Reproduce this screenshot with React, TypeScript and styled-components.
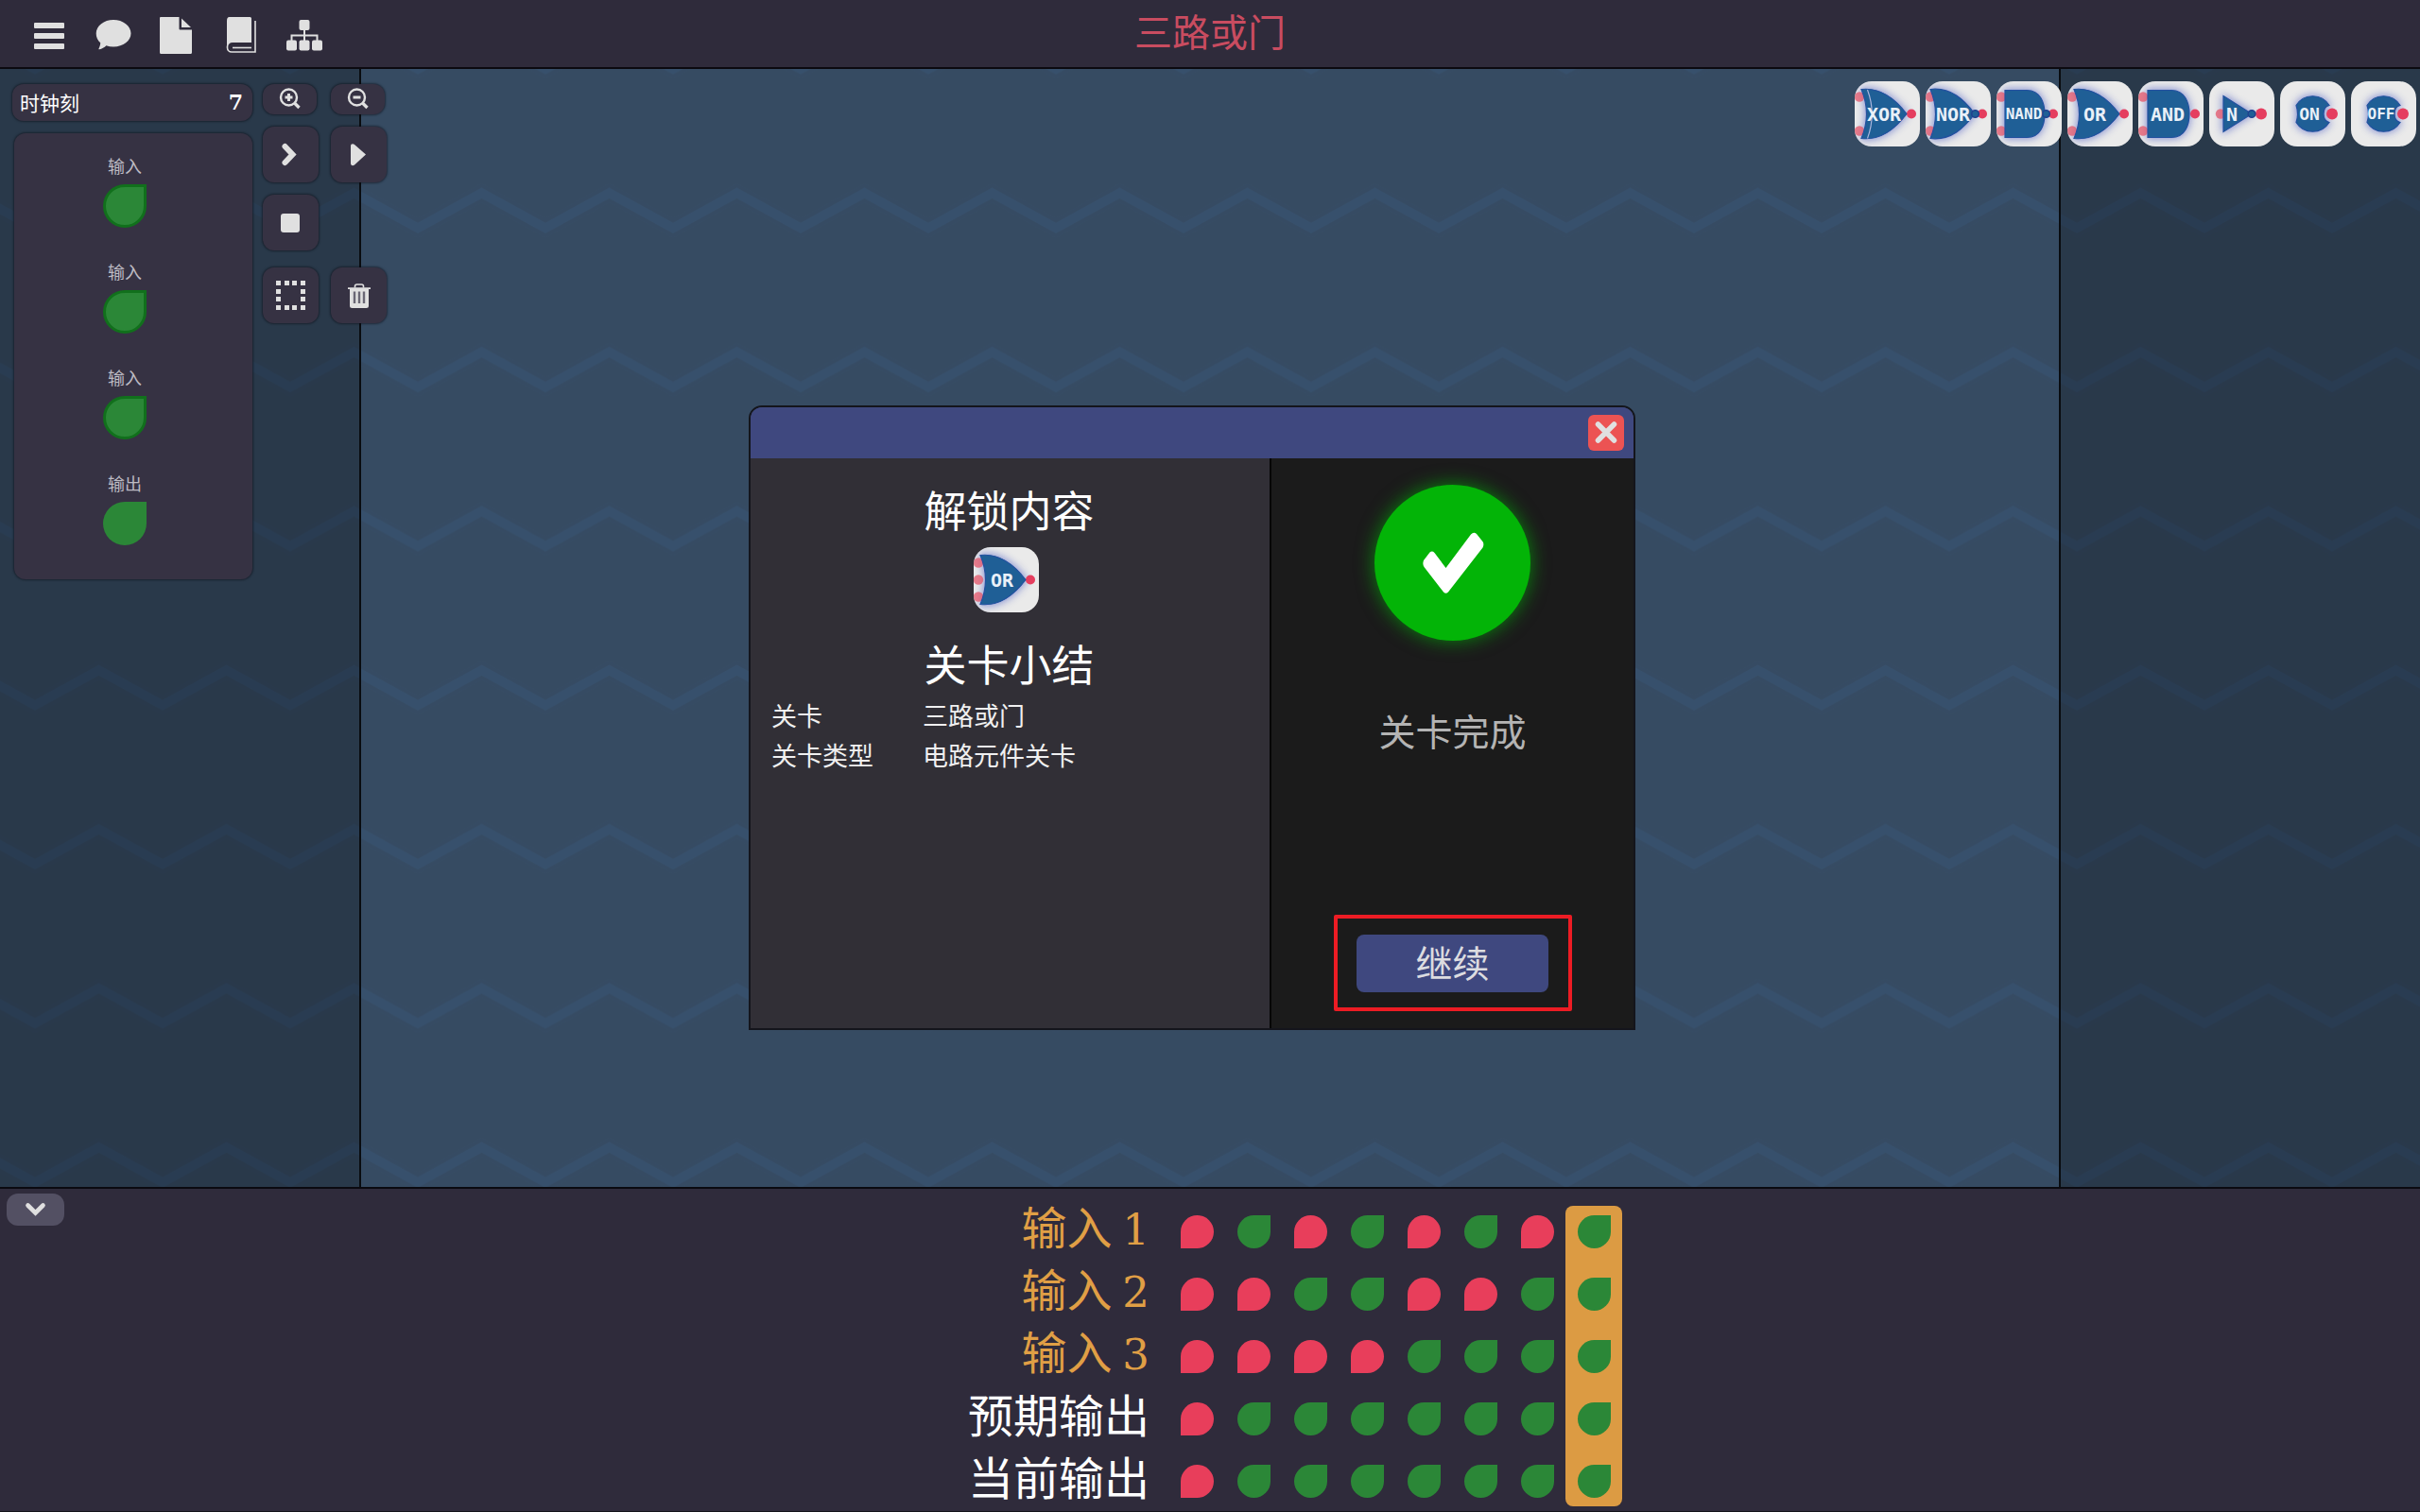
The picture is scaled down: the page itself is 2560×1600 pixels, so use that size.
import React from "react";
import styled, { createGlobalStyle } from "styled-components";

const GlobalStyle = createGlobalStyle`
  *, *::before, *::after { box-sizing: border-box; }
  body {
    margin: 0;
    background: #2f2b3b;
    color: #ffffff;
    font-family: "Noto Sans CJK SC", "Noto Sans", sans-serif;
  }
  button { font: inherit; color: inherit; border: 0; padding: 0; cursor: pointer; }
`;

const INK = "#e0e0e0";

/* ---------- page frame ---------- */

const Page = styled.div`
  min-height: 100vh;
  display: flex;
  flex-direction: column;
`;

const Header = styled.header`
  display: grid;
  grid-template-columns: 1fr auto 1fr;
  align-items: center;
  height: 73px;
  border-bottom: 2px solid #0b0a10;
`;

const MenuBar = styled.nav`
  display: flex;
  gap: 8px;
  padding-left: 22px;
`;

const MenuButton = styled.button`
  width: 60px;
  height: 60px;
  background: none;
  svg { display: block; }
`;

const Title = styled.h1`
  margin: 0;
  padding-bottom: 8px;
  font-size: 40px;
  line-height: 60px;
  font-weight: 400;
  color: #c94c60;
`;

const Stage = styled.main`
  position: relative;
  flex: 1;
  display: flex;
  justify-content: space-between;
  align-items: flex-start;
  background: #364b62;
  overflow: hidden;
`;

const Waves = styled.svg`
  position: absolute;
  inset: 0;
  width: 100%;
  height: 100%;
`;

const Lane = styled.div<{ $side: "left" | "right" }>`
  position: absolute;
  top: 0;
  bottom: 0;
  ${(p) => p.$side}: 0;
  width: 382px;
  background: rgba(0, 0, 0, 0.24);
  border: 0 solid #090c10;
  border-${(p) => (p.$side === "left" ? "right" : "left")}-width: 2px;
`;

/* ---------- left tools ---------- */

const Tools = styled.div`
  position: relative;
  display: flex;
  gap: 11px;
  padding: 16px 0 0 13px;
`;

const Side = styled.div`
  display: flex;
  flex-direction: column;
  gap: 13px;
  width: 254px;
`;

const Tick = styled.div`
  display: flex;
  justify-content: space-between;
  align-items: center;
  height: 39px;
  padding: 0 10px 0 8px;
  border-radius: 12px;
  background: #363243;
  box-shadow: 0 0 2px 1px rgba(10, 12, 20, 0.5);
  font-size: 21px;
  line-height: 39px;
`;

const TickCount = styled.b`
  font-family: "DejaVu Serif", serif;
  font-size: 22px;
`;

const Ports = styled.div`
  display: flex;
  flex-direction: column;
  margin-left: 2px;
  padding: 22px 18px 2px 0;
  border-radius: 12px;
  background: #363243;
  box-shadow: 0 0 2px 1px rgba(10, 12, 20, 0.5);
`;

const Port = styled.div`
  display: flex;
  flex-direction: column;
  align-items: center;
  gap: 8px;
  height: 112px;
  color: #bdbbc3;
  font-size: 18px;
  line-height: 24px;
`;

const PortDrop = styled.button<{ $output?: boolean }>`
  width: 46px;
  height: 46px;
  border: ${(p) => (p.$output ? "0" : "3px solid #11701c")};
  border-radius: 50% 0 50% 50%;
  background: #2b8737;
`;

const Controls = styled.div`
  display: grid;
  grid-template-columns: 59px 59px;
  column-gap: 13px;
  row-gap: 13px;
  align-content: start;
`;

const Tool = styled.button<{ $short?: boolean; $spaced?: boolean; $first?: boolean }>`
  display: grid;
  place-items: center;
  width: ${(p) => (p.$short ? 57 : 59)}px;
  height: ${(p) => (p.$short ? 32 : 59)}px;
  margin-top: ${(p) => (p.$spaced ? 5 : 0)}px;
  grid-column: ${(p) => (p.$first ? 1 : "auto")};
  border-radius: 12px;
  background: #363243;
  box-shadow: 0 0 2px 1px rgba(10, 12, 20, 0.5);
`;

/* ---------- gate palette ---------- */

const Palette = styled.div`
  position: relative;
  display: flex;
  gap: 6px;
  padding: 13px 4px 0 0;
`;

const GateTile = styled.button`
  width: 69px;
  height: 69px;
  border-radius: 18px;
  background: #eaeaea;
  overflow: hidden;
  svg { display: block; }
`;

/* ---------- dialog ---------- */

const DialogLayer = styled.div`
  position: absolute;
  inset: 0;
  display: flex;
  justify-content: center;
  align-items: flex-start;
  padding: 356px 38px 0 0;
  pointer-events: none;
`;

const Dialog = styled.section`
  width: 938px;
  border: 2px solid #14151c;
  border-radius: 14px 14px 0 0;
  overflow: hidden;
  pointer-events: auto;
`;

const DialogBar = styled.div`
  display: flex;
  justify-content: flex-end;
  align-items: center;
  height: 54px;
  padding-right: 10px;
  background: #3f487f;
`;

const Close = styled.button`
  display: grid;
  place-items: center;
  width: 38px;
  height: 38px;
  border-radius: 6px;
  background: #ec5353;
`;

const DialogBody = styled.div`
  display: grid;
  grid-template-columns: 1fr 385px;
  min-height: 603px;
`;

const Summary = styled.div`
  display: flex;
  flex-direction: column;
  align-items: center;
  padding: 23px 24px 0 22px;
  background: #312f36;
`;

const Heading = styled.h2`
  margin: 0;
  font-size: 45px;
  line-height: 62px;
  font-weight: 400;
`;

const Unlocked = styled.div`
  display: flex;
  justify-content: center;
  padding: 9px 6px 23px 0;
`;

const Facts = styled.table`
  width: 100%;
  margin-top: 3px;
  border-collapse: collapse;
  font-size: 27px;
  line-height: 42px;
  color: #f0f0f0;
  th, td { padding: 0; text-align: left; font-weight: 400; }
  th { width: 160px; }
`;

const Result = styled.div`
  display: flex;
  flex-direction: column;
  align-items: center;
  padding: 28px 0 18px;
  border-left: 2px solid #060606;
  background: #1b1b1b;
`;

const Badge = styled.div`
  display: grid;
  place-items: center;
  width: 165px;
  height: 165px;
  border-radius: 50%;
  background: #03b407;
  box-shadow: 0 0 20px rgba(3, 180, 7, 0.7);
`;

const ResultText = styled.p`
  margin: 68px 0 0;
  font-size: 39px;
  line-height: 52px;
  color: #b4b4b4;
`;

const Frame = styled.div`
  margin-top: auto;
  display: grid;
  place-items: center;
  width: 252px;
  height: 102px;
  border: 4px solid #ed1c24;
  border-radius: 2px;
`;

const Continue = styled.button`
  width: 203px;
  height: 61px;
  padding-bottom: 4px;
  border-radius: 8px;
  background: #3f487f;
  color: #dcdce0;
  font-size: 39px;
  line-height: 56px;
`;

/* ---------- truth table ---------- */

const Footer = styled.footer`
  display: grid;
  grid-template-columns: 180px 1fr;
  align-items: start;
  border-top: 2px solid #0b0a10;
  box-shadow: inset 0 -1px 0 #14131a;
`;

const Collapse = styled.button`
  display: grid;
  place-items: center;
  width: 61px;
  height: 34px;
  margin: 5px 0 0 7px;
  border-radius: 12px;
  background: #535063;
`;

const TruthWrap = styled.div`
  position: relative;
  justify-self: center;
  padding-top: 12px;
`;

const Marker = styled.div`
  position: absolute;
  top: 18px;
  bottom: 6px;
  right: 0;
  width: 60px;
  border-radius: 8px;
  background: #dc9b43;
`;

const Truth = styled.table`
  position: relative;
  border-collapse: collapse;
  td, th { height: 66px; padding: 0; }
`;

const SignalName = styled.th<{ $input: boolean }>`
  && { padding: 0 20px 12px 0; }
  font-size: 48px;
  line-height: 52px;
  font-weight: 400;
  text-align: right;
  white-space: nowrap;
  color: ${(p) => (p.$input ? "#e09f45" : "#ffffff")};
`;

const Digit = styled.span`
  font-family: "DejaVu Serif", serif;
  font-size: 45px;
  line-height: 1;
`;

const SignalCell = styled.td`
  width: 60px;
`;

const Drop = styled.div<{ $on: boolean }>`
  width: 35px;
  height: 35px;
  margin: 0 auto;
  background: ${(p) => (p.$on ? "#2b8737" : "#e83e5b")};
  border-radius: ${(p) => (p.$on ? "50% 0 50% 50%" : "50% 50% 50% 0")};
`;

/* ---------- drawings ---------- */

function MenuIcon({ children }: { children: React.ReactNode }) {
  return (
    <svg width="60" height="60" viewBox="0 0 60 60" fill={INK}>
      {children}
    </svg>
  );
}

const menu = [
  {
    name: "菜单",
    icon: (
      <>
        <rect x="14" y="18" width="32" height="6" rx="1" />
        <rect x="14" y="29" width="32" height="6" rx="1" />
        <rect x="14" y="40" width="32" height="6" rx="1" />
      </>
    ),
  },
  {
    name: "对话",
    icon: (
      <path d="M30 15c10 0 18.500 6.300 18.500 14.300S40.500 43.500 30 43.500c-2.800 0-5.300-.4-7.600-1.200-2 2-4.700 3.600-7.300 4-.7 0-.9-.6-.5-1.100 1-1.900 1.600-3.900 1.600-5.900-3-2.600-4.500-6-4.500-10C11.700 21.300 20 15 30 15z" />
    ),
  },
  {
    name: "文件",
    icon: (
      <>
        <path d="M12 12h19.500v12.500a1 1 0 0 0 1 1H45V49.500a1.500 1.500 0 0 1-1.500 1.500h-31A1.500 1.500 0 0 1 11 49.500V13a1 1 0 0 1 1-1z" />
        <path d="M34 13.500v9.500h10z" />
      </>
    ),
  },
  {
    name: "手册",
    icon: (
      <>
        <path d="M16.500 12H38.500a1.500 1.500 0 0 1 1.500 1.500V39H20c-3 0-4.500 2-5 4.500l-1 1V16c0-2.500 1-4 2.500-4z" />
        <path
          d="M44 16V49H19a4.500 4.500 0 0 1-4.500-4.500v-2"
          fill="none"
          stroke={INK}
          strokeWidth="1.600"
        />
        <path d="M20 44.500h20" stroke={INK} strokeWidth="1.600" />
      </>
    ),
  },
  {
    name: "关卡图",
    icon: (
      <>
        <rect x="22.500" y="15" width="11" height="11" rx="2" />
        <rect x="9" y="36.500" width="11" height="11" rx="2" />
        <rect x="22.500" y="36.500" width="11" height="11" rx="2" />
        <rect x="36" y="36.500" width="11" height="11" rx="2" />
        <path d="M28 25v12M14.500 37v-5.500h27V37" fill="none" stroke={INK} strokeWidth="2" />
      </>
    ),
  },
];

function ZoomIcon({ plus }: { plus?: boolean }) {
  return (
    <svg width="24" height="24" viewBox="0 0 24 24" fill="none" stroke={INK} strokeWidth="2.400">
      <circle cx="10.500" cy="10" r="8.500" />
      <path d="M16.500 16l5 5" strokeWidth="3.400" />
      <path d={plus ? "M6.500 10h8M10.500 6v8" : "M6.500 10h8"} strokeWidth="3" />
    </svg>
  );
}

function StepIcon() {
  return (
    <svg width="28" height="28" viewBox="0 0 28 28" fill="none" stroke={INK} strokeWidth="6" strokeLinecap="round">
      <path d="M7.500 5l8 8.500-8 8.500" />
    </svg>
  );
}

function PlayIcon() {
  return (
    <svg width="28" height="28" viewBox="0 0 28 28" fill={INK}>
      <path d="M5 4.500c0-2 2-3 4-1.500L21 13.500 9 24.500C7 26 5 25 5 23z" />
    </svg>
  );
}

function StopIcon() {
  return (
    <svg width="22" height="20" viewBox="0 0 22 20" fill={INK}>
      <rect width="20" height="20" rx="3" />
    </svg>
  );
}

function SelectIcon() {
  const marks: Array<[number, number]> = [];
  [0, 9, 17, 26].forEach((a) => {
    marks.push([a, 0], [a, 26]);
    if (a > 0 && a < 26) marks.push([0, a], [26, a]);
  });
  return (
    <svg width="31" height="31" viewBox="0 0 31 31" fill={INK}>
      {marks.map(([x, y]) => (
        <rect key={`${x}-${y}`} x={x} y={y} width="5" height="5" />
      ))}
    </svg>
  );
}

function TrashIcon() {
  return (
    <svg width="24" height="26" viewBox="0 0 24 26">
      <path d="M7.500 4.500V3a2 2 0 0 1 2-2h5a2 2 0 0 1 2 2v1.500" fill="none" stroke={INK} strokeWidth="1.600" />
      <path d="M0 4.300h24V6h-2v17.500A2.500 2.500 0 0 1 19.500 26h-15A2.500 2.500 0 0 1 2 23.500V6H0z" fill={INK} />
      <path d="M7 8.500v12.500M12 8.500v12.500M17 8.500v12.500" stroke="#6a6775" strokeWidth="2.400" />
    </svg>
  );
}

function CloseIcon() {
  return (
    <svg width="24" height="24" viewBox="0 0 24 24" stroke={INK} strokeWidth="5.500" strokeLinecap="round">
      <path d="M3.500 3l17 17M20.500 3l-17 17" />
    </svg>
  );
}

function CheckIcon() {
  return (
    <svg width="66" height="66" viewBox="0 0 66 66" fill="#ffffff">
      <path d="M8.500 21.500Q11 19.500 13.500 22L25.500 38 52 2.500Q55 -.5 58 2L64 9.500Q66.500 12 64.500 16.500L28 63.500Q25.500 66 23 63.500L2.500 37Q.5 34 2 30z" />
    </svg>
  );
}

function ChevronDown() {
  return (
    <svg width="24" height="18" viewBox="0 0 24 18" fill="none" stroke={INK} strokeWidth="4.600" strokeLinecap="round">
      <path d="M3.500 4.500l8 8 8-8" />
    </svg>
  );
}

type Gate = {
  label: string;
  kind: "or" | "and" | "not" | "const";
  size?: number;
  textX: number;
  tip?: number;
  left?: number;
  inverted?: boolean;
  exclusive?: boolean;
  triple?: boolean;
};

function GateIcon({ gate }: { gate: Gate }) {
  const { kind, left = 7, tip = 55 } = gate;
  const small = kind === "not" || kind === "const";
  const body = {
    or: `M${left} 8.500C${left + 22} 6 ${tip - 11} 20 ${tip} 34.500C${tip - 11} 49 ${left + 22} 63 ${left} 60.500Q${left + 11} 34.500 ${left} 8.500z`,
    and: `M${left} 9.500h${tip - left - 19}C${tip - 4} 9.500 ${tip} 24 ${tip} 34.500S${tip - 4} 59.500 ${tip - 19} 59.500H${left}z`,
    not: "M15 15.500L45 34.500 15 53.500z",
    const: "M17 25.500C25 12.500 44 12.500 52 25.500Q46 27 46 34.500T52 43.500C44 56.500 25 56.500 17 43.500Q20 34.500 17 25.500z",
  }[kind];
  const outX = small ? 55 : 60;
  const inputs: Array<[number, number]> =
    kind === "const" ? [] : kind === "not" ? [[12, 34.5]] : [[5, 16.5], [5, 52.5]];
  if (gate.triple) inputs.push([5, 34.5]);
  return (
    <svg width="69" height="69" viewBox="0 0 69 69">
      <path d={body} fill="#3f51c0" style={{ filter: "blur(4px)" }} stroke="#3f51c0" strokeWidth="3" opacity="0.6" />
      {inputs.map(([x, y]) => (
        <circle key={y} cx={x} cy={y} r="5.200" fill="#e4566a" opacity="0.75" />
      ))}
      <circle cx={outX} cy="34.500" r={small ? 6 : 5} fill="#e53e5f" />
      <path d={body} fill="#1f5f96" stroke="#2250a0" strokeWidth="1.200" />
      {gate.exclusive && <path d="M13.500 9Q23 34.500 13.500 60.500" fill="none" stroke="#a9b4dc" strokeWidth="1.200" />}
      {gate.inverted && (
        <circle cx={kind === "not" ? 45 : 52.5} cy="34.500" r="3.800" fill="#1f5f96" stroke="#20428f" strokeWidth="1.600" />
      )}
      <text
        x={gate.textX}
        y={34.5 + (gate.size ?? 20) * 0.36}
        textAnchor="middle"
        fill="#e9f0f8"
        fontFamily='"DejaVu Sans Mono", monospace'
        fontWeight="700"
        fontSize={gate.size ?? 20}
      >
        {gate.label}
      </text>
    </svg>
  );
}

/* ---------- data ---------- */

const gates: Gate[] = [
  { label: "XOR", kind: "or", textX: 31, exclusive: true },
  { label: "NOR", kind: "or", textX: 29, left: 5, tip: 52, inverted: true },
  { label: "NAND", kind: "and", textX: 29, left: 9, tip: 51, size: 16, inverted: true },
  { label: "OR", kind: "or", textX: 29 },
  { label: "AND", kind: "and", textX: 31, left: 10, tip: 54 },
  { label: "N", kind: "not", textX: 24, inverted: true },
  { label: "ON", kind: "const", textX: 31, size: 18 },
  { label: "OFF", kind: "const", textX: 32, size: 16 },
];

const unlocked: Gate = { label: "OR", kind: "or", textX: 30, triple: true };

const ports = ["输入", "输入", "输入", "输出"];

const signals = [
  { name: "输入", index: 1, bits: "01010101" },
  { name: "输入", index: 2, bits: "00110011" },
  { name: "输入", index: 3, bits: "00001111" },
  { name: "预期输出", bits: "01111111" },
  { name: "当前输出", bits: "01111111" },
];

const facts = [
  ["关卡", "三路或门"],
  ["关卡类型", "电路元件关卡"],
];

export default function App() {
  return (
    <Page>
      <GlobalStyle />
      <Header>
        <MenuBar>
          {menu.map((m) => (
            <MenuButton key={m.name} aria-label={m.name}>
              <MenuIcon>{m.icon}</MenuIcon>
            </MenuButton>
          ))}
        </MenuBar>
        <Title>三路或门</Title>
      </Header>

      <Stage>
        <Waves aria-hidden="true">
          <defs>
            <pattern id="zigzag" x="37" y="-85" width="135" height="168.300" patternUnits="userSpaceOnUse">
              <g fill="none" strokeLinejoin="miter">
                <path d="M-67.500 48L0 85 67.500 48 135 85 202.500 48" stroke="#344e66" strokeWidth="18" opacity="0.3" />
                <path d="M-67.500 48L0 85 67.500 48 135 85 202.500 48" stroke="#37506c" strokeWidth="10" />
              </g>
            </pattern>
          </defs>
          <rect width="100%" height="100%" fill="url(#zigzag)" />
        </Waves>
        <Lane $side="left" />
        <Lane $side="right" />

        <Tools>
          <Side>
            <Tick>
              <span>时钟刻</span>
              <TickCount>7</TickCount>
            </Tick>
            <Ports>
              {ports.map((name, i) => (
                <Port key={i}>
                  <span>{name}</span>
                  <PortDrop aria-label={`${name} ${i + 1}`} $output={name === "输出"} />
                </Port>
              ))}
            </Ports>
          </Side>
          <Controls>
            <Tool $short aria-label="放大"><ZoomIcon plus /></Tool>
            <Tool $short aria-label="缩小"><ZoomIcon /></Tool>
            <Tool aria-label="单步"><StepIcon /></Tool>
            <Tool aria-label="运行"><PlayIcon /></Tool>
            <Tool $first aria-label="停止"><StopIcon /></Tool>
            <Tool $first $spaced aria-label="框选"><SelectIcon /></Tool>
            <Tool $spaced aria-label="删除"><TrashIcon /></Tool>
          </Controls>
        </Tools>

        <Palette>
          {gates.map((g) => (
            <GateTile key={g.label}>
              <GateIcon gate={g} />
            </GateTile>
          ))}
        </Palette>

        <DialogLayer>
          <Dialog role="dialog" aria-label="关卡完成">
            <DialogBar>
              <Close aria-label="关闭"><CloseIcon /></Close>
            </DialogBar>
            <DialogBody>
              <Summary>
                <Heading>解锁内容</Heading>
                <Unlocked>
                  <GateTile>
                    <GateIcon gate={unlocked} />
                  </GateTile>
                </Unlocked>
                <Heading>关卡小结</Heading>
                <Facts>
                  <tbody>
                    {facts.map(([k, v]) => (
                      <tr key={k}>
                        <th scope="row">{k}</th>
                        <td>{v}</td>
                      </tr>
                    ))}
                  </tbody>
                </Facts>
              </Summary>
              <Result>
                <Badge><CheckIcon /></Badge>
                <ResultText>关卡完成</ResultText>
                <Frame>
                  <Continue>继续</Continue>
                </Frame>
              </Result>
            </DialogBody>
          </Dialog>
        </DialogLayer>
      </Stage>

      <Footer>
        <Collapse aria-label="收起"><ChevronDown /></Collapse>
        <TruthWrap>
          <Marker />
          <Truth>
            <tbody>
              {signals.map((s, i) => (
                <tr key={i}>
                  <SignalName scope="row" $input={s.index !== undefined}>
                    {s.name}
                    {s.index !== undefined && <> <Digit>{s.index}</Digit></>}
                  </SignalName>
                  {s.bits.split("").map((b, j) => (
                    <SignalCell key={j}>
                      <Drop $on={b === "1"} />
                    </SignalCell>
                  ))}
                </tr>
              ))}
            </tbody>
          </Truth>
        </TruthWrap>
      </Footer>
    </Page>
  );
}
